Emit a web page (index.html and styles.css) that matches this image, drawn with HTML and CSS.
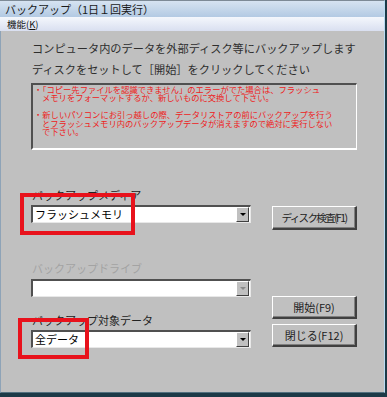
FILE: index.html
```html
<!DOCTYPE html>
<html>
  <head>
  <meta charset="UTF-8">
  <meta name="viewport" content="width=device-width,initial-scale=1.0">
  <link rel="stylesheet" href="styles.css">
  </head>
  <body>
    <div class="window">
      <div class="title_bar">バックアップ（1日１回実行）</div>
      <div class="menu_bar"><span class="menu_item">機能(<u>K</u>)</span></div>
      <div class="client">
        <p class="intro">コンピュータ内のデータを外部ディスク等にバックアップします</p>
        <p class="intro">ディスクをセットして［開始］をクリックしてください</p>
        <div class="notice">
          <div class="notice_item">・「コピー先ファイルを認識できません」のエラーがでた場合は、フラッシュ<br>メモリをフォーマットするか、新しいものに交換して下さい。</div>
          <div class="notice_item">・新しいパソコンにお引っ越しの際、データリストアの前にバックアップを行う<br>とフラッシュメモリ内のバックアップデータが消えますので絶対に実行しない<br>で下さい。</div>
        </div>
        <div class="fields">
          <div class="field_col">
            <div class="field_label first">バックアップメディア</div>
            <div class="combo c_media">
              <span class="combo_text">フラッシュメモリ</span>
              <span class="combo_btn"><span class="arrow"></span></span>
            </div>
            <div class="field_label disabled second">バックアップドライブ</div>
            <div class="combo c_drive">
              <span class="combo_text"></span>
              <span class="combo_btn"><span class="arrow off"></span></span>
            </div>
            <div class="field_label third">バックアップ対象データ</div>
            <div class="combo c_data">
              <span class="combo_text">全データ</span>
              <span class="combo_btn"><span class="arrow"></span></span>
            </div>
          </div>
          <div class="btn_col">
            <button type="button" class="win_btn b_check">ディスク検査(F1)</button>
            <button type="button" class="win_btn b_start">開始(F9)</button>
            <button type="button" class="win_btn b_close">閉じる(F12)</button>
          </div>
        </div>
        <div class="mark mark_media"></div>
        <div class="mark mark_data"></div>
      </div>
    </div>
  </body>
</html>
```
FILE: styles.css
```css
*{
  margin:0;
  padding:0;
  box-sizing:border-box;
}
body{
  background-color:#1c3a47;
  font-family:"Noto Sans CJK JP","Noto Sans",sans-serif;
}
.window{
  width:387px;
  height:397px;
  display:flex;
  flex-direction:column;
  background-color:#1c3a47;
}
.title_bar{
  height:17px;
  width:385px;
  padding-left:5px;
  font-size:11px;
  line-height:17px;
  color:#1a1a1a;
  background:linear-gradient(#d6e3f1,#b3cae3);
  border-top:1px solid #7d8a96;
  border-right:1px solid #b9dcf2;
}
.menu_bar{
  height:14px;
  width:385px;
  padding-left:7px;
  font-size:9.5px;
  line-height:14px;
  color:#111;
  background:linear-gradient(#f4f7fc,#d9dff0);
  border-right:1px solid #b9dcf2;
}
.client{
  position:relative;
  width:385px;
  height:362px;
  background-color:#c0c0c0;
  border-left:1px solid #8ea3b7;
  border-right:1px solid #b9dcf2;
  border-bottom:1px solid #52707f;
  padding:7px 0 0 30px;
}
.intro{
  font-size:11.2px;
  line-height:21px;
  color:#2e2e2e;
  padding-left:1px;
  white-space:nowrap;
}
.notice{
  margin-top:3px;
  width:326px;
  height:67px;
  border-top:2px solid #505050;
  border-left:2px solid #505050;
  border-right:1px solid #ffffff;
  border-bottom:2px solid #ffffff;
  padding:0 0 0 1px;
  color:#ee1c1c;
  font-size:8.3px;
  line-height:8.4px;
  white-space:nowrap;
  overflow:hidden;
}
.notice_item{
  padding-left:8px;
  text-indent:-8px;
  margin-bottom:8.4px;
}
.fields{
  display:flex;
  gap:21px;
}
.field_col{
  width:220px;
  display:flex;
  flex-direction:column;
}
.field_label{
  font-size:11px;
  line-height:13px;
  height:13px;
  color:#222;
  padding-left:1px;
}
.field_label.first{ margin-top:39px; }
.field_label.second{ margin-top:39px; }
.field_label.third{ margin-top:17px; }
.field_label.disabled{ color:#a3a3a3; }
.combo{
  display:flex;
  height:18px;
  margin-top:3px;
  background-color:#ffffff;
  border-top:2px solid #505050;
  border-left:2px solid #505050;
  border-right:1px solid #e8e8e8;
  border-bottom:1px solid #e8e8e8;
}
.c_drive{ margin-top:4px; }
.combo_text{
  flex:1;
  font-size:11px;
  line-height:15px;
  padding-left:2px;
  color:#000;
}
.combo_btn{
  width:13px;
  margin:0 1px 0 0;
  background-color:#c0c0c0;
  border-top:1px solid #ffffff;
  border-left:1px solid #ffffff;
  border-right:1px solid #404040;
  border-bottom:1px solid #404040;
  display:flex;
  align-items:center;
  justify-content:center;
}
.arrow{
  width:0;
  height:0;
  border-left:3px solid transparent;
  border-right:3px solid transparent;
  border-top:3px solid #000;
}
.arrow.off{ border-top-color:#8a8a8a; }
.btn_col{
  width:85px;
  display:flex;
  flex-direction:column;
}
.win_btn{
  font-family:"Noto Sans CJK JP","Noto Sans",sans-serif;
  font-size:11px;
  color:#222;
  background-color:#c0c0c0;
  border-top:1px solid #ffffff;
  border-left:1px solid #ffffff;
  border-right:2px solid #404040;
  border-bottom:2px solid #404040;
  box-shadow:inset -1px -1px 0 #808080;
  height:23px;
  white-space:nowrap;
}
.b_check{
  margin-top:56px;
  height:24px;
  font-size:10.5px;
  letter-spacing:-1.6px;
}
.b_start{ margin-top:66px; }
.b_close{ margin-top:5px; }
.mark{
  position:absolute;
  border:4px solid #e8121c;
}
.mark_media{
  left:19px;
  top:162px;
  width:115px;
  height:42px;
}
.mark_data{
  left:17px;
  top:287px;
  width:71px;
  height:41px;
}
```
